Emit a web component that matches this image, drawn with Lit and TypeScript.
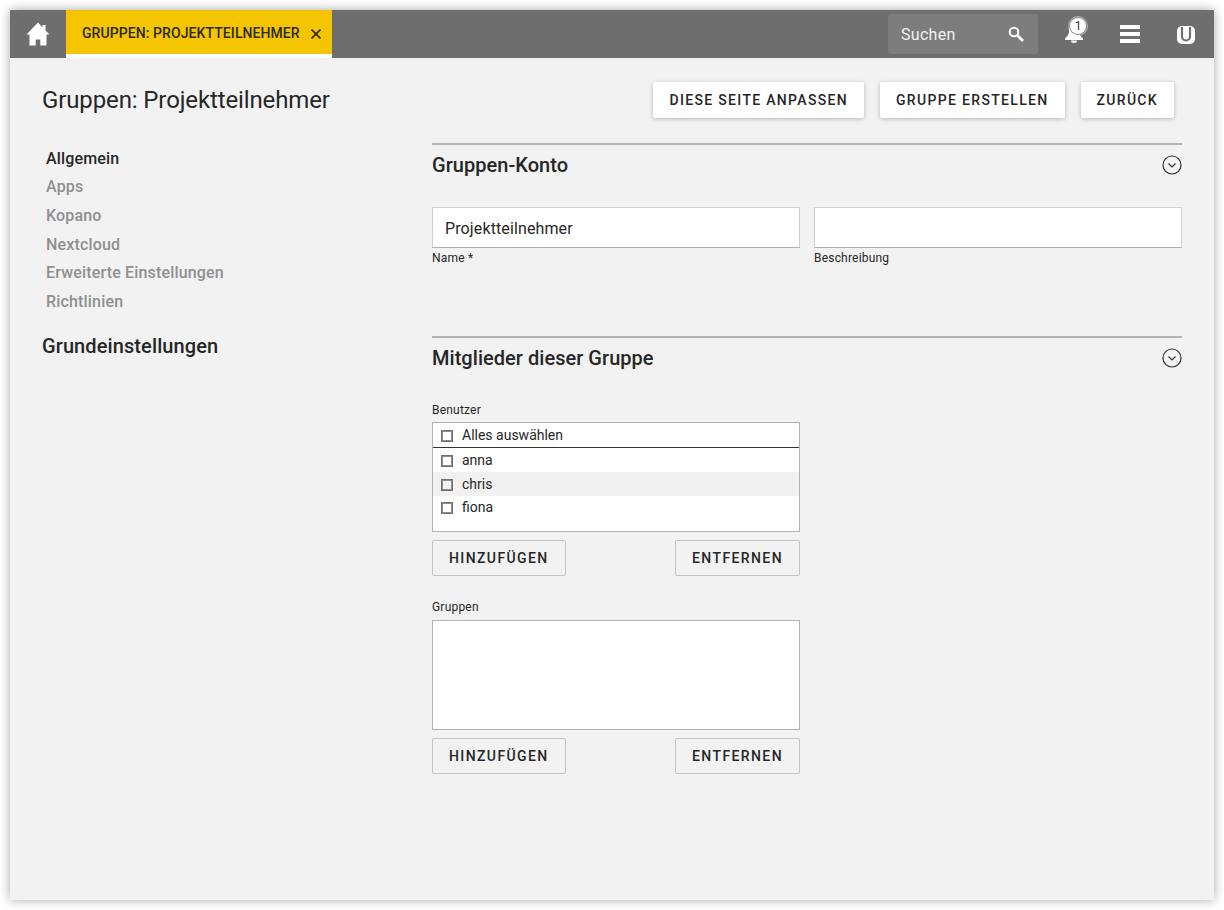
import { LitElement, html, css } from 'lit';
import { customElement } from 'lit/decorators.js';

const NAV = ['Apps', 'Kopano', 'Nextcloud', 'Erweiterte Einstellungen', 'Richtlinien'];
const USERS = ['anna', 'chris', 'fiona'];

const chevron = html`<svg class="chevron" width="20" height="20" viewBox="0 0 20 20" fill="none" stroke="#333" stroke-width="1.2">
  <circle cx="10" cy="10" r="9"></circle>
  <path d="M6.5 8.5 10 12l3.5-3.5"></path>
</svg>`;

@customElement('app-root')
export class AppRoot extends LitElement {
  static styles = css`
    :host {
      display: block;
      padding: 10px;
      background: #fff;
      font-family: Roboto, "Liberation Sans", sans-serif;
      color: #262626;
    }
    .window {
      height: 890px;
      background: #f2f2f2;
      box-shadow: 0 0 10px rgba(0, 0, 0, 0.35);
      display: flex;
      flex-direction: column;
    }
    .topbar {
      height: 48px;
      background: #6e6e6e;
      display: flex;
      align-items: center;
      flex: none;
    }
    .home {
      width: 56px;
      height: 48px;
      display: flex;
      align-items: center;
      justify-content: center;
    }
    .tab {
      width: 266px;
      height: 48px;
      box-sizing: border-box;
      border-bottom: 4px solid #fff;
      background: #f4c500;
      display: flex;
      align-items: center;
      padding: 1px 0 0 16px;
      font-size: 14px;
      font-weight: 500;
      letter-spacing: 0.08px;
      color: #2b2b1a;
      white-space: nowrap;
    }
    .tab svg { margin-left: 11px; margin-top: 2px; }
    .spacer { flex: 1; }
    .search {
      width: 150px;
      height: 40px;
      box-sizing: border-box;
      background: #7d7d7d;
      border-radius: 3px;
      display: flex;
      align-items: center;
      justify-content: space-between;
      padding: 0 13px;
      color: #f1f1f1;
      font-size: 16px;
      letter-spacing: 0.3px;
      margin-right: 8px;
    }
    .icon-btn {
      width: 56px;
      height: 48px;
      display: flex;
      align-items: center;
      justify-content: center;
      position: relative;
    }
    .bell { margin-top: -6px; }
    .logo { margin-top: 2px; }
    .badge {
      position: absolute;
      left: 24px;
      top: 8px;
      width: 16px;
      height: 16px;
      border-radius: 50%;
      background: #fff;
      color: #333;
      font-size: 12px;
      line-height: 16px;
      text-align: center;
      box-shadow: 0 0 0 1px #8a8a8a, 0 0 0 2px rgba(255, 255, 255, 0.45);
    }
    .page {
      flex: 1;
      padding: 24px 32px 0;
    }
    .title-row {
      display: flex;
      align-items: center;
      height: 36px;
    }
    h1 {
      margin: 0;
      font-size: 24px;
      font-weight: 400;
      letter-spacing: -0.12px;
      flex: 1;
    }
    .raised {
      height: 36px;
      margin-right: 8px;
      margin-left: 8px;
      padding: 0 16px;
      display: flex;
      align-items: center;
      background: #fff;
      border-radius: 2px;
      box-shadow: 0 1px 4px rgba(0, 0, 0, 0.25);
      font-size: 14px;
      font-weight: 500;
      letter-spacing: 1.32px;
      white-space: nowrap;
    }
    .columns {
      display: flex;
      margin-top: 25px;
    }
    .sidebar {
      width: 390px;
      flex: none;
      padding-top: 1.5px;
    }
    .nav-item {
      padding-left: 4px;
      height: 28.7px;
      line-height: 28.7px;
      font-size: 16px;
      font-weight: 500;
      letter-spacing: 0.17px;
      color: #8f8f8f;
    }
    .nav-item.active { color: #262626; }
    .sidebar h2 {
      margin: 15.5px 0 0;
      font-size: 20px;
      font-weight: 500;
      letter-spacing: 0.1px;
      line-height: 28px;
    }
    .main { flex: 1; }
    .section-head {
      border-top: 2px solid #b3b3b3;
      height: 40px;
      display: flex;
      align-items: center;
      justify-content: space-between;
    }
    .section-head h2 {
      margin: 0;
      font-size: 20px;
      font-weight: 500;
      letter-spacing: 0.04px;
    }
    .fields {
      display: grid;
      grid-template-columns: 368px 368px;
      gap: 14px;
      margin-top: 22px;
      height: 129px;
    }
    .input {
      height: 41px;
      box-sizing: border-box;
      border: 1px solid #d0d0d0;
      border-bottom-color: #b0b0b0;
      background: #fff;
      padding: 2px 12px 0;
      display: flex;
      align-items: center;
      font-size: 16px;
      letter-spacing: 0.12px;
    }
    .label {
      font-size: 12px;
      line-height: 14px;
      letter-spacing: 0.2px;
    }
    .fields .label { margin-top: 3px; }
    .picker { width: 368px; }
    .picker .label { margin-bottom: 5px; }
    .picker + .picker .label { margin-bottom: 6px; }
    .members { margin-top: 25px; }
    .list {
      height: 110px;
      box-sizing: border-box;
      border: 1px solid #b3b3b3;
      background: #fff;
    }
    .list-head {
      height: 25px;
      box-sizing: border-box;
      border-bottom: 1px solid #333;
      display: flex;
      align-items: center;
      padding-left: 8px;
      font-size: 14px;
      gap: 9px;
    }
    .row {
      height: 24px;
      display: flex;
      align-items: center;
      padding-left: 8px;
      font-size: 14px;
      gap: 9px;
    }
    .row:last-child { height: 22px; }
    .row.hover { background: #f1f1f1; }
    .check {
      width: 10px;
      height: 10px;
      border: 1px solid #707070;
      box-shadow: inset 0 0 0 1px #8c8c8c;
      background: #fff;
      flex: none;
      margin-top: 1px;
    }
    .row.hover .check { background: #f1f1f1; }
    .actions {
      display: flex;
      justify-content: space-between;
      margin-top: 8px;
    }
    .flat {
      height: 36px;
      box-sizing: border-box;
      padding: 0 16px;
      display: flex;
      align-items: center;
      border: 1px solid #c4c4c4;
      border-radius: 2px;
      font-size: 14px;
      font-weight: 500;
      letter-spacing: 1.4px;
    }
    .picker + .picker { margin-top: 24px; }
  `;

  private _picker(label: string, users: string[]) {
    return html`
      <div class="picker">
        <div class="label">${label}</div>
        <div class="list">
          ${users.length
            ? html`
                <div class="list-head"><span class="check"></span>Alles auswählen</div>
                ${users.map(
                  (u) => html`<div class="row ${u === 'chris' ? 'hover' : ''}"><span class="check"></span>${u}</div>`
                )}
              `
            : ''}
        </div>
        <div class="actions">
          <div class="flat">HINZUFÜGEN</div>
          <div class="flat">ENTFERNEN</div>
        </div>
      </div>
    `;
  }

  render() {
    return html`
      <div class="window">
        <div class="topbar">
          <div class="home">
            <svg width="24" height="24" viewBox="0 0 24 24" fill="#fff">
              <path d="M12 0.5 0.5 12.500h3V23.500h6.200V17.500h4.600V23.500h6.200V12.500h3L19.500 8.500V3h-3v2.500z"></path>
            </svg>
          </div>
          <div class="tab">
            GRUPPEN: PROJEKTTEILNEHMER
            <svg width="10" height="10" viewBox="0 0 10 10" stroke="#2b2b1a" stroke-width="1.6">
              <path d="M0.5 0.5l9 9M9.500 0.5l-9 9"></path>
            </svg>
          </div>
          <div class="spacer"></div>
          <div class="search">
            Suchen
            <svg width="18" height="18" viewBox="0 0 18 18" fill="none" stroke="#fff">
              <circle cx="7" cy="7" r="4.300" stroke-width="2"></circle>
              <path d="M10.500 10.500 16 16" stroke-width="2.800"></path>
            </svg>
          </div>
          <div class="icon-btn">
            <svg class="bell" width="20" height="26" viewBox="0 0 20 26" fill="#fff">
              <path d="M10 2C7 2 5 4.500 5 8v6c0 2.500-2 4.500-4 6.500V22h18v-1.500c-2-2-4-4-4-6.500V8c0-3.500-2-6-5-6z"></path>
              <path d="M7 22.500h6a3 2.500 0 0 1-6 0z"></path>
            </svg>
            <span class="badge">1</span>
          </div>
          <div class="icon-btn">
            <svg width="20" height="18" viewBox="0 0 20 18" fill="#fff">
              <rect y="0" width="20" height="4"></rect>
              <rect y="7" width="20" height="4"></rect>
              <rect y="14" width="20" height="4"></rect>
            </svg>
          </div>
          <div class="icon-btn">
            <svg class="logo" width="18" height="18" viewBox="0 0 18 18">
              <rect width="18" height="18" rx="5" fill="#fff"></rect>
              <path d="M5 1v9.500a4 4 0 0 0 8 0V1" fill="none" stroke="#6e6e6e" stroke-width="2.200"></path>
            </svg>
          </div>
        </div>
        <div class="page">
          <div class="title-row">
            <h1>Gruppen: Projektteilnehmer</h1>
            <div class="raised">DIESE SEITE ANPASSEN</div>
            <div class="raised">GRUPPE ERSTELLEN</div>
            <div class="raised">ZURÜCK</div>
          </div>
          <div class="columns">
            <div class="sidebar">
              <div class="nav-item active">Allgemein</div>
              ${NAV.map((n) => html`<div class="nav-item">${n}</div>`)}
              <h2>Grundeinstellungen</h2>
            </div>
            <div class="main">
              <div class="section-head"><h2>Gruppen-Konto</h2>${chevron}</div>
              <div class="fields">
                <div>
                  <div class="input">Projektteilnehmer</div>
                  <div class="label">Name *</div>
                </div>
                <div>
                  <div class="input"></div>
                  <div class="label">Beschreibung</div>
                </div>
              </div>
              <div class="section-head"><h2>Mitglieder dieser Gruppe</h2>${chevron}</div>
              <div class="members">
                ${this._picker('Benutzer', USERS)}
                ${this._picker('Gruppen', [])}
              </div>
            </div>
          </div>
        </div>
      </div>
    `;
  }
}
